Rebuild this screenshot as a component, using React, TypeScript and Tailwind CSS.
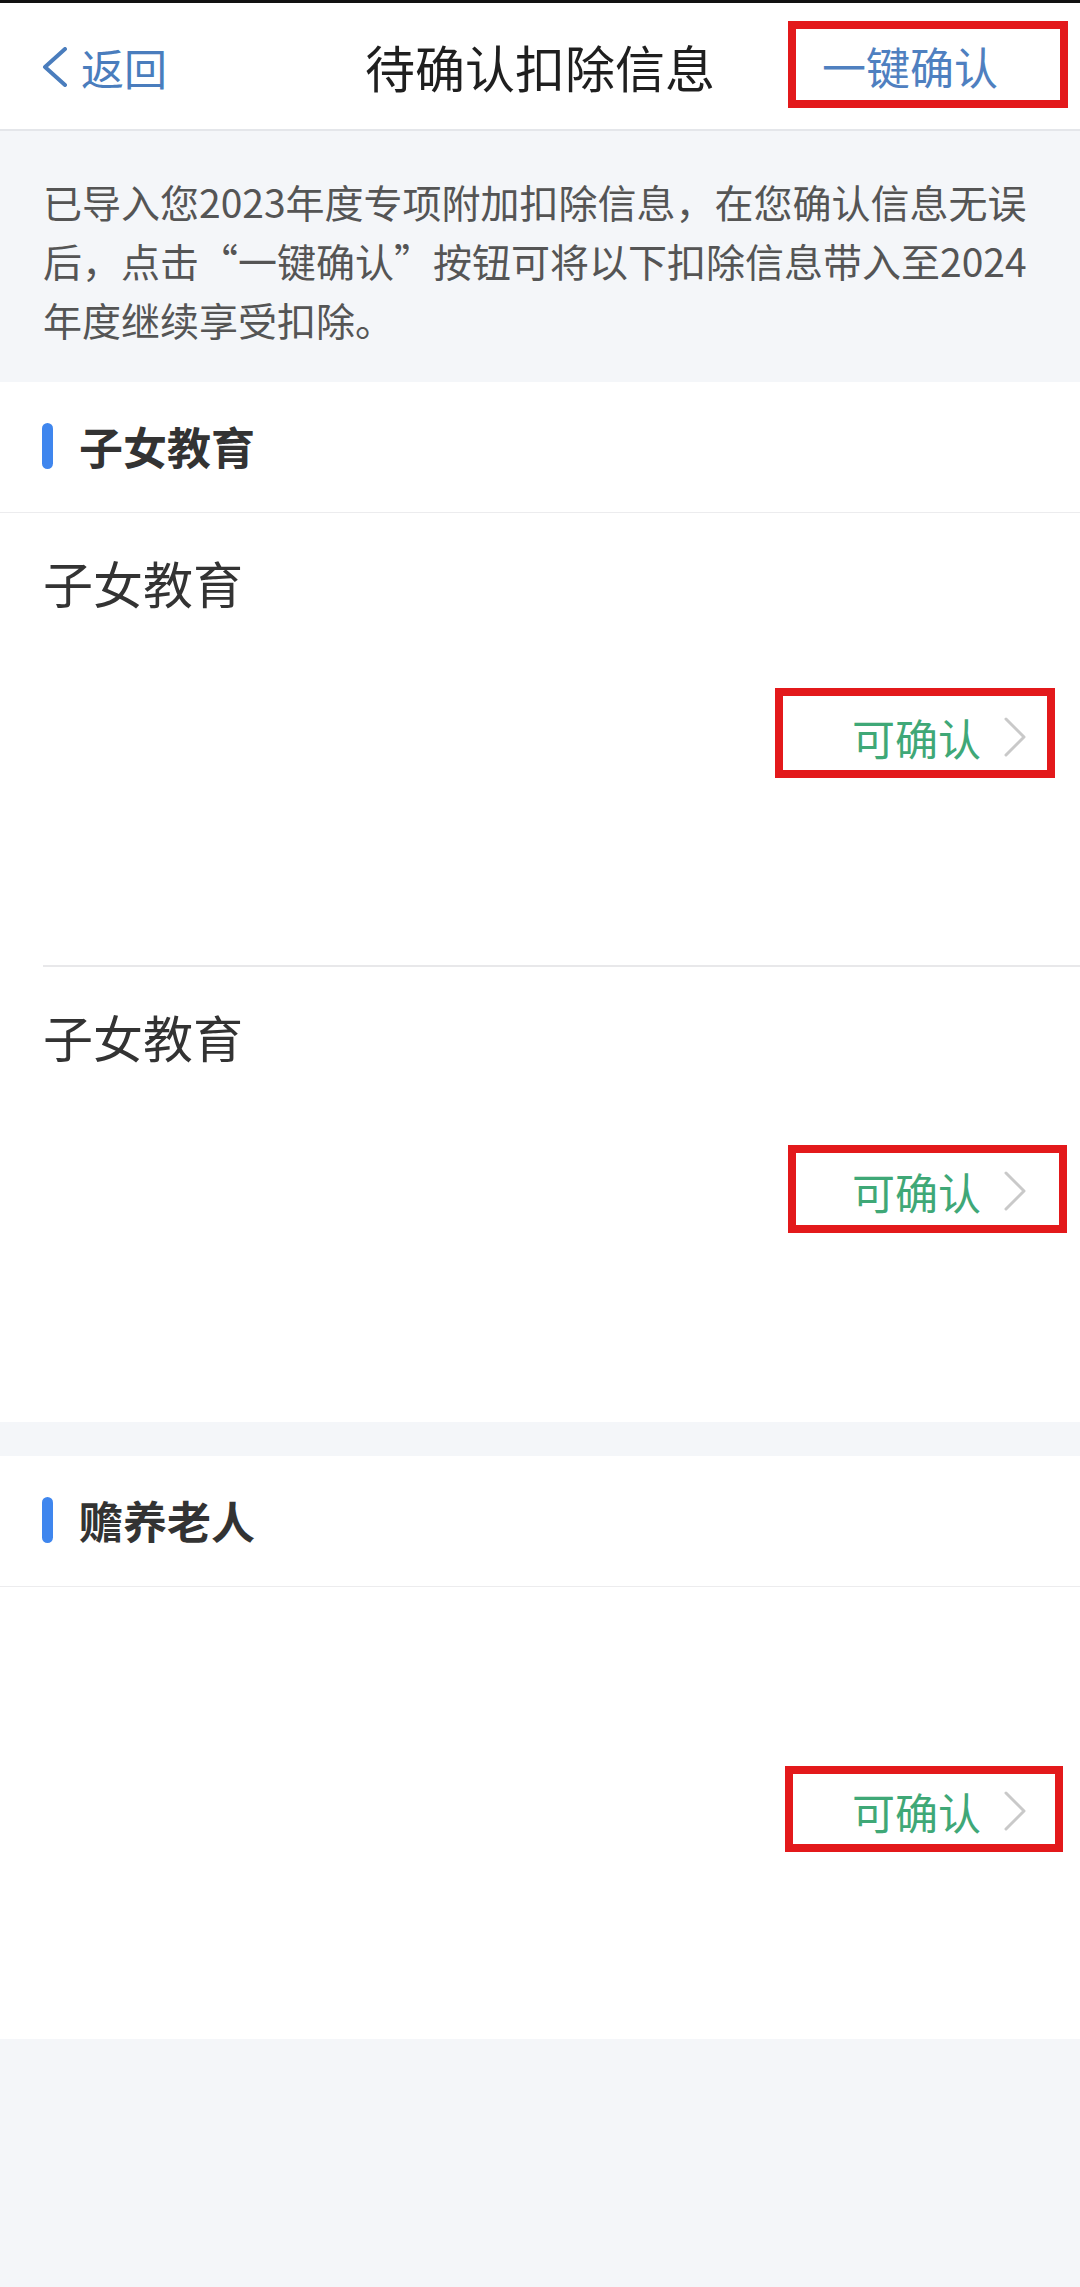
import type { ReactNode } from "react";

const FONT = { fontFamily: '"Noto Sans CJK SC", "Noto Sans", sans-serif' };

type Item = {
  title: string;
  h: string;
  last?: boolean;
  box: string;
};

function RedBox({ className }: { className: string }) {
  return <div className={`pointer-events-none absolute border-[8px] border-[#e3191b] ${className}`} />;
}

function Chevron() {
  return (
    <svg width="24" height="40" viewBox="0 0 24 40" fill="none" className="shrink-0">
      <path d="M3 2 L21 20 L3 38" stroke="#c9c9c9" strokeWidth="3" strokeLinecap="round" strokeLinejoin="round" />
    </svg>
  );
}

function DeductionItem({ item }: { item: Item }) {
  return (
    <div className="pl-[43px]">
      <div className={`relative flex flex-col pr-[53px] ${item.h} ${item.last ? "" : "border-b-2 border-[#e8e8ea]"}`}>
        <div className="mt-[44px] h-[50px] text-[50px] leading-[50px] text-[#333333]">{item.title}</div>
        <div className="mt-[108px] flex h-[44px] items-center justify-end gap-[22px]">
          <span className="text-[43px] leading-[44px] text-[#3fa877]">可确认</span>
          <Chevron />
        </div>
        <RedBox className={item.box} />
      </div>
    </div>
  );
}

function Section({ title, children }: { title: string; children: ReactNode }) {
  return (
    <section className="bg-white">
      <div className="flex h-[131px] items-center gap-[26px] border-b border-[#ececee] pb-[2px] pl-[42px]">
        <span className="h-[46px] w-[11px] rounded-full bg-[#3f86ee]" />
        <h2 className="text-[44px] font-bold leading-[50px] text-[#333333]">{title}</h2>
      </div>
      {children}
    </section>
  );
}

export default function App() {
  const childItems: Item[] = [
    { title: "子女教育", h: "h-[454px]", box: "left-[732px] top-[175px] h-[90px] w-[280px]" },
    { title: "子女教育", h: "h-[455px]", last: true, box: "left-[745px] top-[178px] h-[88px] w-[279px]" },
  ];
  const elderItems: Item[] = [
    { title: "", h: "h-[452px]", last: true, box: "left-[742px] top-[179px] h-[86px] w-[278px]" },
  ];

  return (
    <div className="min-h-[2287px] w-[1080px] bg-[#f4f6f9]" style={FONT}>
      <header className="relative bg-white">
        <div className="h-[3px] bg-[#111111]" />
        <div className="grid h-[128px] grid-cols-[1fr_auto_1fr] items-center border-b-2 border-[#e4e6ea]">
          <div className="flex items-center gap-[13px] pl-[41px] pt-[2px]">
            <svg width="27" height="40" viewBox="0 0 27 40" fill="none">
              <path d="M24 2 L4 20 L24 38" stroke="#4a7dbd" strokeWidth="4" strokeLinecap="round" strokeLinejoin="round" />
            </svg>
            <span className="text-[43px] leading-[50px] text-[#4a7dbd]">返回</span>
          </div>
          <h1 className="text-[50px] leading-[56px] text-[#1f1f1f]">待确认扣除信息</h1>
          <div className="flex justify-end pr-[82px]">
            <span className="text-[44px] leading-[50px] text-[#4f80c0]">一键确认</span>
          </div>
        </div>
        <RedBox className="left-[788px] top-[21px] h-[87px] w-[280px]" />
      </header>

      <div className="px-[43px] pb-[33px] pt-[41px] text-[39px] leading-[59px] text-[#555555]">
        <p className="whitespace-nowrap">已导入您2023年度专项附加扣除信息，在您确认信息无误</p>
        <p className="whitespace-nowrap">后，点击“一键确认”按钮可将以下扣除信息带入至2024</p>
        <p className="whitespace-nowrap">年度继续享受扣除。</p>
      </div>

      <Section title="子女教育">
        {childItems.map((item, i) => (
          <DeductionItem key={i} item={item} />
        ))}
      </Section>

      <div className="h-[34px]" />

      <Section title="赡养老人">
        {elderItems.map((item, i) => (
          <DeductionItem key={i} item={item} />
        ))}
      </Section>
    </div>
  );
}
